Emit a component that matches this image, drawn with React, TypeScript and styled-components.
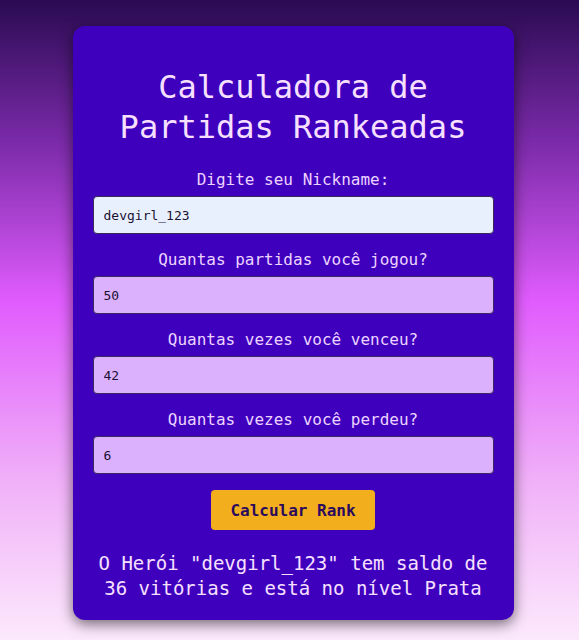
import React from 'react';
import styled, { createGlobalStyle } from 'styled-components';

const GlobalStyle = createGlobalStyle`
  html, body {
    margin: 0;
    padding: 0;
    min-height: 100%;
  }
  body {
    min-height: 640px;
    background: linear-gradient(to bottom, #2a0b52 0%, #7a2aa8 22%, #e05cfd 47%, #f0b0f8 75%, #fce9fc 100%);
    font-family: "DejaVu Sans Mono", "Liberation Mono", monospace;
  }
`;

const Page = styled.div`
  display: flex;
  justify-content: center;
  padding: 26px 0 20px 7px;
`;

const Card = styled.div`
  width: 441px;
  box-sizing: border-box;
  padding: 20px 20px 19px;
  background-color: #3f00be;
  border-radius: 12px;
  box-shadow: 0 4px 14px rgba(0, 0, 0, 0.55);
  text-align: center;
`;

const Title = styled.h1`
  font-size: 32px;
  line-height: 40px;
  font-weight: 400;
  color: #f7e0ff;
  margin: 21px 0 23px;
`;

const Field = styled.div`
  display: flex;
  flex-direction: column;
  gap: 7px;
  margin-bottom: 16px;
`;

const Label = styled.label`
  font-size: 16px;
  line-height: 19px;
  color: #ecd4ff;
`;

const Input = styled.input<{ $filled?: boolean }>`
  height: 38px;
  box-sizing: border-box;
  width: 100%;
  padding: 0 10px;
  border: 1px solid #3a2a5c;
  border-radius: 4px;
  font-family: "DejaVu Sans Mono", monospace;
  font-size: 13px;
  color: #1a1030;
  background-color: ${(p) => (p.$filled ? '#e8f0fe' : '#dbb0fd')};
  outline: none;
`;

const Button = styled.button`
  width: 164px;
  height: 40px;
  border: none;
  border-radius: 4px;
  background-color: #f2ae1c;
  color: #2b0a5e;
  font-family: "DejaVu Sans Mono", monospace;
  font-size: 16px;
  font-weight: 700;
  cursor: pointer;
`;

const Result = styled.p`
  margin: 21px 0 0;
  font-size: 19px;
  line-height: 25px;
  color: #f7e0ff;
`;

const fields = [
  { label: 'Digite seu Nickname:', value: 'devgirl_123', filled: true },
  { label: 'Quantas partidas você jogou?', value: '50' },
  { label: 'Quantas vezes você venceu?', value: '42' },
  { label: 'Quantas vezes você perdeu?', value: '6' },
];

const App: React.FC = () => {
  return (
    <Page>
      <GlobalStyle />
      <Card>
        <Title>
          Calculadora de
          <br />
          Partidas Rankeadas
        </Title>
        {fields.map((f) => (
          <Field key={f.label}>
            <Label>{f.label}</Label>
            <Input defaultValue={f.value} $filled={f.filled} />
          </Field>
        ))}
        <Button>Calcular Rank</Button>
        <Result>
          O Herói "devgirl_123" tem saldo de 36 vitórias e está no nível Prata
        </Result>
      </Card>
    </Page>
  );
};

export default App;
